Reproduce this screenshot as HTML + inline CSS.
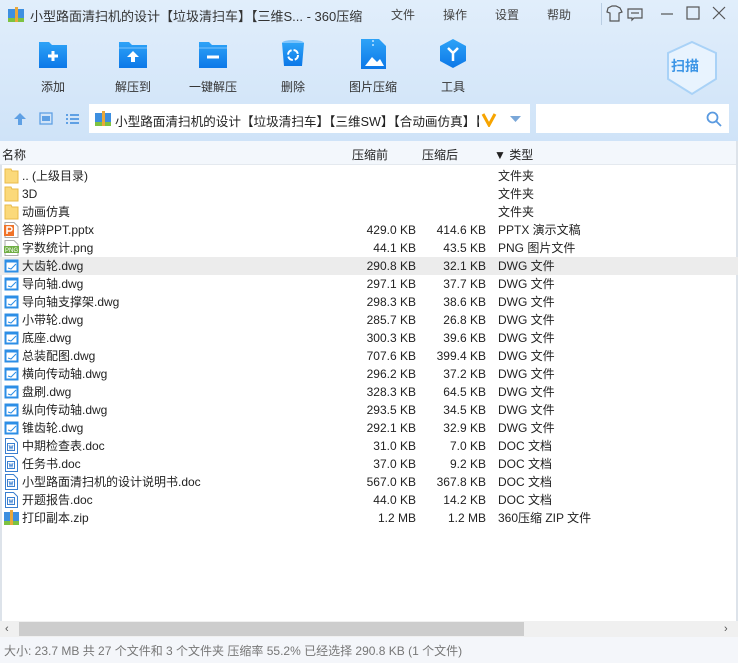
<!DOCTYPE html>
<html><head><meta charset="utf-8"><style>
*{margin:0;padding:0;box-sizing:border-box}
body{width:738px;height:663px;overflow:hidden;font-family:"Liberation Sans","Noto Sans CJK SC",sans-serif;font-size:12px;color:#222;position:relative;background:#fff}
.top{position:absolute;left:0;top:0;width:738px;height:141px;background:linear-gradient(#e1eefb,#cfe3f8)}
.abs{position:absolute}
.tb{position:absolute;top:38px;width:60px;text-align:center;font-size:12px;color:#333}
.tb .ic{display:block;margin:0 auto 8px;width:32px;height:32px}
.hdr{position:absolute;top:141px;left:0;width:738px;height:24px;background:#f3f7fc;border-bottom:1px solid #e4e9ef}
.row{position:absolute;left:0;width:738px;height:18px;line-height:18px}
.row span{position:absolute;white-space:nowrap}
.n{left:22px}.s{right:322px}.p{right:252px}.t{left:498px}
.fi{position:absolute;left:4px;top:1px;width:15px;height:16px}
</style></head><body>
<div class="top"></div>
<svg class="abs" style="left:8px;top:7px" width="16" height="16"><rect x="0" y="2" width="16" height="13" fill="#3d8fe0"/><rect x="0" y="11" width="16" height="4" fill="#7dc241"/><rect x="7" y="0" width="3" height="15" fill="#e9a83b"/></svg>
<div class="abs" style="left:30px;top:6px;font-size:13px;color:#333">小型路面清扫机的设计【垃圾清扫车】【三维S... - 360压缩</div>
<div class="abs" style="left:391px;top:6px;color:#444;font-size:12px">文件</div>
<div class="abs" style="left:443px;top:6px;color:#444">操作</div>
<div class="abs" style="left:495px;top:6px;color:#444">设置</div>
<div class="abs" style="left:547px;top:6px;color:#444">帮助</div>
<div class="abs" style="left:601px;top:3px;width:1px;height:22px;background:#b9cde2"></div>
<svg class="abs" style="left:603px;top:4px" width="135" height="20" fill="none" stroke="#555" stroke-width="1.2">
<path d="M5 4l4-2h4l4 2 2 4-3 1v8H7V9L4 8z"/>
<path d="M25 5h14v9h-8l-2 2v-2h-4z"/><path d="M28 9h8"/>
<path d="M58 10h12"/><rect x="84" y="3" width="12" height="12"/><path d="M110 3l12 12M122 3l-12 12"/></svg>
<svg width="0" height="0" style="position:absolute"><defs>
<linearGradient id="g" x1="0" y1="0" x2="0" y2="1"><stop offset="0" stop-color="#2ea3f7"/><stop offset="1" stop-color="#0c78e8"/></linearGradient></defs></svg>
<div class="tb" style="left:23px"><svg class="ic" viewBox="0 0 32 32"><path d="M2 4h10l3 3h15v23H2z" fill="url(#g)"/><path d="M11 18h10M16 13v10" stroke="#fff" stroke-width="3"/></svg>添加</div>
<div class="tb" style="left:103px"><svg class="ic" viewBox="0 0 32 32"><path d="M2 4h10l3 3h15v23H2z" fill="url(#g)"/><path d="M2 10h28" stroke="#7cc3fb"/><path d="M16 13l-6 6h4v5h4v-5h4z" fill="#fff"/></svg>解压到</div>
<div class="tb" style="left:183px"><svg class="ic" viewBox="0 0 32 32"><path d="M2 4h10l3 3h15v23H2z" fill="url(#g)"/><path d="M2 10h28" stroke="#7cc3fb"/><path d="M10 19h12" stroke="#fff" stroke-width="3"/></svg>一键解压</div>
<div class="tb" style="left:263px"><svg class="ic" viewBox="0 0 32 32"><ellipse cx="16" cy="5" rx="11" ry="3" fill="#7cc3fb"/><path d="M5 5l2 23h18l2-23z" fill="url(#g)"/><circle cx="16" cy="17" r="5" fill="none" stroke="#fff" stroke-width="2" stroke-dasharray="6 2"/></svg>删除</div>
<div class="tb" style="left:343px"><svg class="ic" viewBox="0 0 32 32"><path d="M4 1h18l7 7v23H4z" fill="url(#g)"/><path d="M8 28l7-9 5 5 3-3 4 7z" fill="#fff"/><path d="M16 2v8" stroke="#9cd3fd" stroke-dasharray="2 2" stroke-width="2"/></svg>图片压缩</div>
<div class="tb" style="left:423px"><svg class="ic" viewBox="0 0 32 32"><path d="M16 1l13 7v15l-13 7-13-7V8z" fill="url(#g)"/><path d="M11 10l5 5 5-5M16 15v8" stroke="#fff" stroke-width="2.5" fill="none"/></svg>工具</div>
<svg class="abs" style="left:658px;top:40px" width="68" height="56"><path d="M34 2l24 11v26L34 54 10 39V13z" fill="#e8f3fe" stroke="#a9d2f7" stroke-width="2"/></svg>
<div class="abs" style="left:671px;top:56px;font-size:14px;font-weight:bold;color:#3c95e6">扫描</div>
<svg class="abs" style="left:13px;top:111px" width="70" height="16" fill="#5fa0e4"><path d="M7 2l6 6H9v6H5V8H1z"/><rect x="27" y="2" width="12" height="11" fill="none" stroke="#5fa0e4" stroke-width="1.3"/><rect x="29" y="5" width="8" height="5"/><path d="M53 3h2v2h-2zM57 3h9v2h-9zM53 7h2v2h-2zM57 7h9v2h-9zM53 11h2v2h-2zM57 11h9v2h-9z"/></svg>
<div class="abs" style="left:89px;top:104px;width:441px;height:29px;background:#fff"></div>
<svg class="abs" style="left:95px;top:111px" width="16" height="16"><rect x="0" y="2" width="16" height="13" fill="#3d8fe0"/><rect x="0" y="11" width="16" height="4" fill="#7dc241"/><rect x="7" y="0" width="3" height="15" fill="#e9a83b"/></svg>
<div class="abs" style="left:115px;top:111px;font-size:12.6px;width:364px;overflow:hidden;white-space:nowrap">小型路面清扫机的设计【垃圾清扫车】【三维SW】【合动画仿真】【</div>
<svg class="abs" style="left:481px;top:111px" width="40" height="16"><path d="M2 3l6 11 6-11" fill="none" stroke="#f7a400" stroke-width="3"/><path d="M29 5h11l-5.5 6z" fill="#7aa7d8"/></svg>
<div class="abs" style="left:536px;top:104px;width:193px;height:29px;background:#fff"></div>
<svg class="abs" style="left:706px;top:111px" width="16" height="16" fill="none" stroke="#5a9ae0" stroke-width="1.8"><circle cx="6.5" cy="6.5" r="5"/><path d="M10 10l5 5"/></svg>
<div class="hdr"></div>
<div class="abs" style="left:2px;top:146px">名称</div>
<div class="abs" style="left:352px;top:146px">压缩前</div>
<div class="abs" style="left:422px;top:146px">压缩后</div>
<div class="abs" style="left:494px;top:146px">▼ 类型</div>
<div class="abs" style="left:0;top:165px;width:2px;height:456px;background:#dde3ea"></div>
<div class="abs" style="left:736px;top:141px;width:2px;height:496px;background:#dde3ea"></div>
<div id="rows"></div>
<div class="abs" style="left:0;top:621px;width:738px;height:16px;background:#f0f0f0"></div>
<div class="abs" style="left:19px;top:622px;width:505px;height:14px;background:#cdcdcd"></div>
<div class="abs" style="left:5px;top:621px;font-size:11px;color:#555;line-height:16px">&lsaquo;</div>
<div class="abs" style="left:724px;top:621px;font-size:11px;color:#555;line-height:16px">&rsaquo;</div>
<div class="abs" style="left:0;top:637px;width:738px;height:26px;background:#f4f6fa"></div>
<div class="abs" style="left:4px;top:642px;color:#777;font-size:12px">大小: 23.7 MB 共 27 个文件和 3 个文件夹 压缩率 55.2% 已经选择 290.8 KB (1 个文件)</div>
<script>
var F='<svg class="fi" viewBox="0 0 15 16"><path d="M1 1h6l1 2h6v12H1z" fill="#fbd97a" stroke="#e8bb4a"/></svg>';
var P='<svg class="fi" viewBox="0 0 15 16"><path d="M1 .5h9l4 4v11H1z" fill="#fff" stroke="#aaa"/><rect x="0" y="3" width="10" height="11" fill="#f07328"/><path d="M3 12V5h3a2 2 0 010 4H3" stroke="#fff" fill="none" stroke-width="1.5"/></svg>';
var G='<svg class="fi" viewBox="0 0 15 16"><path d="M1 .5h9l4 4v11H1z" fill="#fff" stroke="#aaa"/><rect x="0" y="6" width="15" height="7" fill="#6fae44"/><text x="1" y="12" font-size="6" fill="#fff" font-family="Liberation Sans">PNG</text></svg>';
var D='<svg class="fi" viewBox="0 0 15 16"><rect x=".5" y="1.5" width="14" height="13" fill="#2c8ee6"/><rect x="2.5" y="4.5" width="10" height="8" fill="#fff"/><path d="M4 10l3 1 5-5" stroke="#2c8ee6" fill="none"/></svg>';
var W='<svg class="fi" viewBox="0 0 15 16"><path d="M1.5 .5h8l4 4v11h-12z" fill="#fff" stroke="#3a7fd0"/><rect x="3.5" y="5.5" width="7" height="7" fill="none" stroke="#3a7fd0"/><path d="M5 7l1 4 1-3 1 3 1-4" stroke="#3a7fd0" fill="none" stroke-width=".8"/></svg>';
var Z='<svg class="fi" viewBox="0 0 15 16"><rect x="0" y="2" width="15" height="13" fill="#3d8fe0"/><rect x="0" y="11" width="15" height="4" fill="#7dc241"/><rect x="6" y="0" width="3" height="15" fill="#e9a83b"/></svg>';
var r=[[F,'.. (上级目录)','','','文件夹'],[F,'3D','','','文件夹'],[F,'动画仿真','','','文件夹'],
[P,'答辩PPT.pptx','429.0 KB','414.6 KB','PPTX 演示文稿'],[G,'字数统计.png','44.1 KB','43.5 KB','PNG 图片文件'],
[D,'大齿轮.dwg','290.8 KB','32.1 KB','DWG 文件'],[D,'导向轴.dwg','297.1 KB','37.7 KB','DWG 文件'],
[D,'导向轴支撑架.dwg','298.3 KB','38.6 KB','DWG 文件'],[D,'小带轮.dwg','285.7 KB','26.8 KB','DWG 文件'],
[D,'底座.dwg','300.3 KB','39.6 KB','DWG 文件'],[D,'总装配图.dwg','707.6 KB','399.4 KB','DWG 文件'],
[D,'横向传动轴.dwg','296.2 KB','37.2 KB','DWG 文件'],[D,'盘刷.dwg','328.3 KB','64.5 KB','DWG 文件'],
[D,'纵向传动轴.dwg','293.5 KB','34.5 KB','DWG 文件'],[D,'锥齿轮.dwg','292.1 KB','32.9 KB','DWG 文件'],
[W,'中期检查表.doc','31.0 KB','7.0 KB','DOC 文档'],[W,'任务书.doc','37.0 KB','9.2 KB','DOC 文档'],
[W,'小型路面清扫机的设计说明书.doc','567.0 KB','367.8 KB','DOC 文档'],[W,'开题报告.doc','44.0 KB','14.2 KB','DOC 文档'],
[Z,'打印副本.zip','1.2 MB','1.2 MB','360压缩 ZIP 文件']];
var h='';r.forEach(function(x,i){h+='<div class="row" style="top:'+(167+i*18)+'px;'+(i==5?'background:#ececec':'')+'">'+x[0]+'<span class="n">'+x[1]+'</span><span class="s">'+x[2]+'</span><span class="p">'+x[3]+'</span><span class="t">'+x[4]+'</span></div>'});
document.getElementById('rows').innerHTML=h;
</script>
</body></html>
